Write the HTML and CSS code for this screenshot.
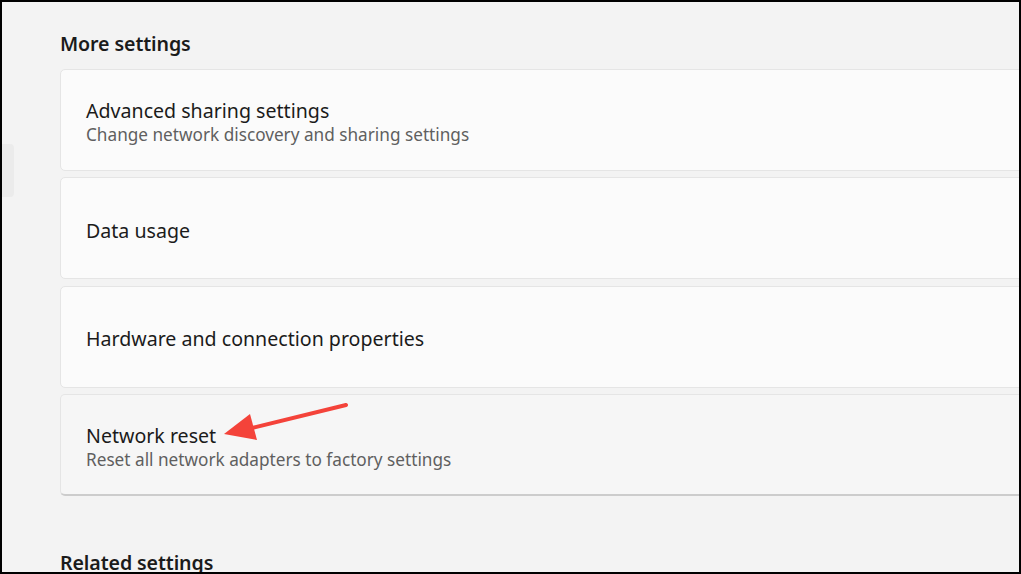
FILE: index.html
```html
<!DOCTYPE html>
<html>
<head>
<meta charset="utf-8">
<link rel="stylesheet" href="styles.css">
</head>
<body>
<div class="frame">
  <div class="sidebar"><div class="stub"></div></div>
  <div class="main">
    <h2 class="section-title">More settings</h2>
    <div class="card">
      <div class="card-title">Advanced sharing settings</div>
      <div class="card-sub">Change network discovery and sharing settings</div>
    </div>
    <div class="card">
      <div class="card-title">Data usage</div>
    </div>
    <div class="card">
      <div class="card-title">Hardware and connection properties</div>
    </div>
    <div class="card hover">
      <div class="card-title">Network reset</div>
      <div class="card-sub">Reset all network adapters to factory settings</div>
    </div>
    <h2 class="section-title related">Related settings</h2>
  </div>
  <svg class="arrow" width="1021" height="574" viewBox="0 0 1021 574">
    <line x1="346" y1="405" x2="248" y2="429" stroke="#f4433a" stroke-width="4" stroke-linecap="round"/>
    <polygon points="224,434 250,414 257,440" fill="#f4433a"/>
  </svg>
</div>
</body>
</html>
```
FILE: styles.css
```css
* { box-sizing: border-box; }
html, body { margin: 0; padding: 0; }
body { background: #000; }
.frame {
  position: relative;
  width: 1021px;
  height: 574px;
  border: 2px solid #000;
  background: #f3f3f3;
  overflow: hidden;
  display: flex;
  font-family: "Noto Sans", "Open Sans", sans-serif;
  color: #1b1b1b;
}
.sidebar { width: 12px; flex: none; }
.stub {
  margin-top: 142px;
  height: 53px;
  width: 12px;
  background: #ebebeb;
  border-radius: 0 4px 4px 0;
}
.main {
  flex: 1;
  padding-left: 46px;
  margin-right: -10px;
}
.section-title {
  margin: 0;
  font-size: 19.6px;
  font-weight: 600;
  line-height: 26px;
  padding-top: 29px;
  height: 66.5px;
  letter-spacing: -0.1px;
}
.section-title.related { padding-top: 0; margin-top: 54px; }
.card {
  height: 102px;
  margin-bottom: 6.5px;
  background: #fbfbfb;
  border: 1px solid #e5e5e5;
  border-radius: 5px;
  display: flex;
  flex-direction: column;
  justify-content: center;
  padding-left: 25px;
  padding-top: 5px;
}
.card.hover {
  background: #f6f6f6;
  border-bottom-color: #cccccc;
  border-bottom-width: 2px;
}
.card-title {
  font-size: 19.6px;
  line-height: 26px;
}
.card-sub {
  font-size: 17.2px;
  line-height: 22px;
  color: #5f5f5f;
}
.arrow { position: absolute; left: -2px; top: -2px; pointer-events: none; }
```
